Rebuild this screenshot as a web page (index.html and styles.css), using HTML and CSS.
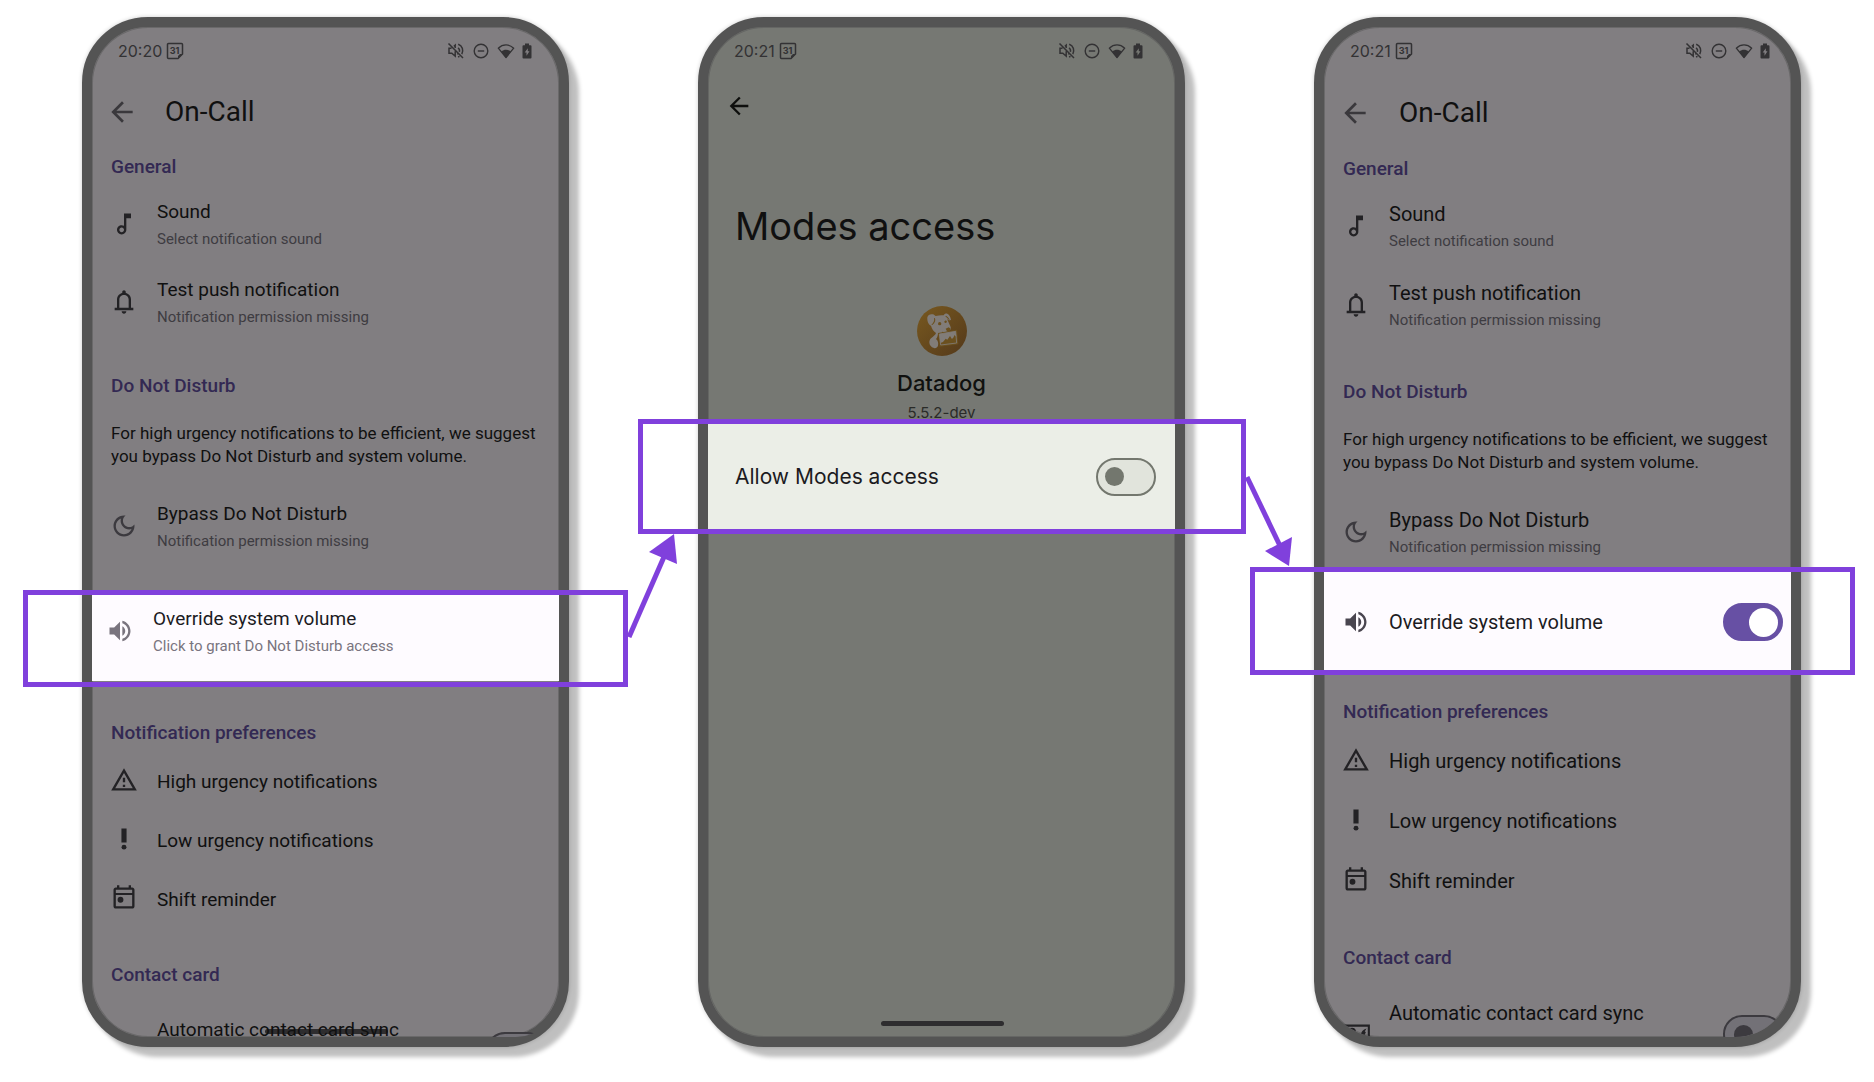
FILE: index.html
```html
<!DOCTYPE html>
<html lang="en">
<head>
<meta charset="utf-8">
<meta name="viewport" content="width=device-width, initial-scale=1">
<title>Override system volume on Android</title>
<link rel="stylesheet" href="styles.css">
</head>
<body>
<svg class="sprite" aria-hidden="true">
  <symbol id="i-back" viewBox="0 0 24 24"><path d="M20 11H7.83l5.59-5.59L12 4l-8 8 8 8 1.41-1.41L7.83 13H20v-2z"/></symbol>
  <symbol id="i-note" viewBox="0 0 24 24"><path d="M12 3l.01 10.55c-.59-.34-1.27-.55-2-.55C7.79 13 6 14.79 6 17s1.79 4 4.01 4S14 19.21 14 17V7h4V3h-6zm-1.99 16c-1.1 0-2-.9-2-2s.9-2 2-2 2 .9 2 2-.9 2-2 2z"/></symbol>
  <symbol id="i-bell" viewBox="0 0 24 24"><path d="M4 19v-2h2v-7c0-1.38.42-2.61 1.25-3.69C8.08 5.24 9.17 4.53 10.5 4.2v-.7c0-.83.67-1.5 1.5-1.5s1.5.67 1.5 1.5v.7c1.33.33 2.42 1.04 3.25 2.11C17.58 7.39 18 8.62 18 10v7h2v2H4zm8 3c-1.1 0-2-.9-2-2h4c0 1.1-.9 2-2 2zM8 17h8v-7c0-2.2-1.8-4-4-4s-4 1.8-4 4v7z"/></symbol>
  <symbol id="i-moon" viewBox="0 0 24 24"><path d="M9.37 5.51C9.19 6.15 9.1 6.82 9.1 7.5c0 4.08 3.32 7.4 7.4 7.4.68 0 1.35-.09 1.99-.27C17.45 17.19 14.93 19 12 19c-3.86 0-7-3.14-7-7 0-2.93 1.81-5.45 4.37-6.49zM12 3c-4.97 0-9 4.03-9 9s4.03 9 9 9 9-4.03 9-9c0-.46-.04-.92-.1-1.36-.98 1.37-2.58 2.26-4.4 2.26-2.98 0-5.4-2.42-5.4-5.4 0-1.81.89-3.42 2.26-4.4C12.92 3.04 12.46 3 12 3z"/></symbol>
  <symbol id="i-volume" viewBox="0 0 24 24"><path d="M3 9v6h4l5 5V4L7 9H3zm13.500 3c0-1.770-1.020-3.290-2.500-4.030v8.050c1.480-.73 2.500-2.250 2.500-4.020zM14 3.230v2.060c2.890.86 5 3.540 5 6.710s-2.110 5.850-5 6.710v2.060c4.010-.91 7-4.490 7-8.770s-2.990-7.860-7-8.770z"/></symbol>
  <symbol id="i-warning" viewBox="0 0 24 24"><path d="M12 5.990L19.530 19H4.470L12 5.990M12 2L1 21h22L12 2zm1 14h-2v2h2v-2zm0-6h-2v4h2v-4z"/></symbol>
  <symbol id="i-priority" viewBox="0 0 24 24"><path d="M9.800 3h4.400v12H9.800z"/><circle cx="12" cy="19" r="2.100"/></symbol>
  <symbol id="i-today" viewBox="0 0 24 24"><path d="M19 3h-1V1h-2v2H8V1H6v2H5c-1.110 0-1.990.9-1.990 2L3 19c0 1.100.89 2 2 2h14c1.100 0 2-.9 2-2V5c0-1.100-.9-2-2-2zm0 16H5V9.500h14V19zm0-11.200H5V5h14v2.800z"/><circle cx="9" cy="13.500" r="2.500"/></symbol>
  <symbol id="i-contact" viewBox="0 0 24 24"><path fill="none" stroke="currentColor" stroke-width="1.800" d="M1 4h22v16H1zM11 9a2.400 2.400 0 1 1-4.800 0 2.400 2.400 0 0 1 4.800 0M4 18c1-5 8-5 9 0"/><path d="M21 6.500c-4 1-6 5-4 9l2-1-.8-2h1l1.300-3-1-.6z"/></symbol>
  <symbol id="i-mute" viewBox="0 0 18 18"><g fill="none" stroke="currentColor" stroke-width="1.500"><path d="M1.500 1.500l14.500 14.500M4.500 6.200H2v5h2.800l3.400 3v-5M8.200 6V3.200L6.900 4.400M11 5.800c1.300.8 1.800 2.300 1.400 4M11.200 2.300c4.200 1.400 5.600 6 3.600 9.800M12.500 14.300l-1.400.7M10.700 11.500v1"/></g></symbol>
  <symbol id="i-dnd" viewBox="0 0 18 18"><circle cx="9" cy="9" r="6.800" fill="none" stroke="currentColor" stroke-width="1.400"/><path d="M5.800 8.300h6.400v1.400H5.800z"/></symbol>
  <symbol id="i-wifi" viewBox="0 0 18 18"><path fill="none" stroke="currentColor" stroke-width="1.300" stroke-linejoin="round" d="M9 15.500L1.300 6.200c4.600-4.400 10.800-4.400 15.400 0z"/><path d="M9 16L4.300 9.500c2.800-2.300 6.600-2.300 9.400 0z"/></symbol>
  <symbol id="i-battery" viewBox="0 0 10 18"><path fill-rule="evenodd" d="M3 1.500h4v1.700h1.500a1 1 0 0 1 1 1v11.300a1 1 0 0 1-1 1h-7a1 1 0 0 1-1-1V4.200a1 1 0 0 1 1-1H3zM5.800 6.200L2.700 10.600h1.800v3.200l3-4.500H5.800z"/></symbol>
</svg>

<main class="steps">
  <section class="phone" aria-label="On-Call settings before access">
    <header class="status">
      <span class="clock">20:20</span>
      <svg class="s-icon" viewBox="0 0 18 18"><path fill="none" stroke="currentColor" stroke-width="1.500" d="M2.500 1.500h13a1 1 0 0 1 1 1v9.500l-4.500 4.500H2.500a1 1 0 0 1-1-1v-13a1 1 0 0 1 1-1z"/><path d="M16.500 12l-4.500 4.500v-2.500l2-2z"/><text class="day" x="8.500" y="12" text-anchor="middle">31</text></svg>
      <span class="tray"><svg class="s-icon"><use href="#i-mute"/></svg><svg class="s-icon"><use href="#i-dnd"/></svg><svg class="s-icon"><use href="#i-wifi"/></svg><svg class="s-icon battery"><use href="#i-battery"/></svg></span>
    </header>
    <div class="appbar"><button class="back" aria-label="Back"><svg><use href="#i-back"/></svg></button><h1>On-Call</h1></div>
    <h2>General</h2>
    <ul>
      <li class="row"><svg class="icon"><use href="#i-note"/></svg><div class="text"><p>Sound</p><small>Select notification sound</small></div></li>
      <li class="row"><svg class="icon"><use href="#i-bell"/></svg><div class="text"><p>Test push notification</p><small>Notification permission missing</small></div></li>
    </ul>
    <h2 class="dnd">Do Not Disturb</h2>
    <p class="hint">For high urgency notifications to be efficient, we suggest<br>you bypass Do Not Disturb and system volume.</p>
    <ul>
      <li class="row muted"><svg class="icon"><use href="#i-moon"/></svg><div class="text"><p>Bypass Do Not Disturb</p><small>Notification permission missing</small></div></li>
      <li class="row highlight">
        <svg class="icon"><use href="#i-volume"/></svg><div class="text"><p>Override system volume</p><small>Click to grant Do Not Disturb access</small></div>
        <span class="callout"><svg class="arrow arrow-up" viewBox="0 0 56 108" aria-hidden="true"><path class="line" d="M2 103L40 16"/><path d="M47 0L22 18l28 12z"/></svg></span>
      </li>
    </ul>
    <h2 class="prefs">Notification preferences</h2>
    <ul>
      <li class="row single"><svg class="icon"><use href="#i-warning"/></svg><p>High urgency notifications</p></li>
      <li class="row single"><svg class="icon"><use href="#i-priority"/></svg><p>Low urgency notifications</p></li>
      <li class="row single"><svg class="icon"><use href="#i-today"/></svg><p>Shift reminder</p></li>
    </ul>
    <h2 class="contact">Contact card</h2>
    <div class="peek">
      <span class="icon"></span>
      <label class="text" for="sync-a">Automatic contact card sync</label>
      <input class="switch" type="checkbox" role="switch" id="sync-a">
    </div>
    <span class="home-bar"></span>
  </section>

  <section class="phone access" aria-label="Modes access">
    <header class="status">
      <span class="clock">20:21</span>
      <svg class="s-icon" viewBox="0 0 18 18"><path fill="none" stroke="currentColor" stroke-width="1.500" d="M2.500 1.500h13a1 1 0 0 1 1 1v9.500l-4.500 4.500H2.500a1 1 0 0 1-1-1v-13a1 1 0 0 1 1-1z"/><path d="M16.500 12l-4.500 4.500v-2.500l2-2z"/><text class="day" x="8.500" y="12" text-anchor="middle">31</text></svg>
      <span class="tray"><svg class="s-icon"><use href="#i-mute"/></svg><svg class="s-icon"><use href="#i-dnd"/></svg><svg class="s-icon"><use href="#i-wifi"/></svg><svg class="s-icon battery"><use href="#i-battery"/></svg></span>
    </header>
    <div class="appbar"><button class="back" aria-label="Back"><svg><use href="#i-back"/></svg></button></div>
    <h1>Modes access</h1>
    <div class="app">
      <svg class="logo" viewBox="15 15 150 150" role="img" aria-label="Datadog logo">
        <defs><linearGradient id="gold" x1="0" y1="0" x2="1" y2="1"><stop offset="0" stop-color="#785920"/><stop offset="1" stop-color="#54391a"/></linearGradient></defs>
        <circle cx="90" cy="90" r="75" fill="url(#gold)"/>
        <g fill="#817c78">
          <path d="M46 49c2-8 9-11 17-9 3 1 5 4 8 5 8-2 17-3 24-2 2-4 6-6 11-5 5 1 9 9 11 18-3 2-6 2-8 1l-4-3c3 6 6 12 8 17 3 5 4 10 3 14-2 5-7 7-12 7l-4 3-22 3c-1 7-2 11-6 16 6 5 8 12 6 20-2 5-7 9-12 7-9-2-14-9-14-17 0-6 3-12 7-14 5-4 11-8 13-14-8-6-12-12-15-22-8-2-12-14-11-25z"/>
        </g>
        <g fill="#6b501e">
          <path d="M68 51c4 6 2 14-7 21l-3-1c7-6 10-12 8-20zM102 44c4 2 8 6 11 12l-2 1c-4-4-7-8-11-11z"/>
          <circle cx="83" cy="68" r="5"/><path d="M97 61l5-3 3 4-3 4-4-1zM101 83l9-4 6 4-2 7-9 1zM91 92l18 5-2 2-17-3z"/>
          <path d="M78 96l57-10 4 44-56 7z"/>
        </g>
        <path d="M82 99l49-8 3 35-48 6z" fill="none" stroke="#817c78" stroke-width="2.500"/>
        <path d="M82 99l49-8 2 17-5-6-5 10-4 1-5-8-8 11-5-3-8 10-8 3z" fill="#817c78"/>
      </svg>
      <strong>Datadog</strong>
      <span>5.5.2-dev</span>
    </div>
    <div class="highlight">
      <label for="modes">Allow Modes access</label>
      <input class="switch" type="checkbox" role="switch" id="modes">
      <span class="callout"><svg class="arrow arrow-down" viewBox="0 0 56 96" aria-hidden="true"><path class="line" d="M2 3L37 76"/><path d="M44 92L20 77l27-14z"/></svg></span>
    </div>
    <span class="home-bar"></span>
  </section>

  <section class="phone granted" aria-label="On-Call settings after access">
    <header class="status">
      <span class="clock">20:21</span>
      <svg class="s-icon" viewBox="0 0 18 18"><path fill="none" stroke="currentColor" stroke-width="1.500" d="M2.500 1.500h13a1 1 0 0 1 1 1v9.500l-4.500 4.500H2.500a1 1 0 0 1-1-1v-13a1 1 0 0 1 1-1z"/><path d="M16.500 12l-4.500 4.500v-2.500l2-2z"/><text class="day" x="8.500" y="12" text-anchor="middle">31</text></svg>
      <span class="tray"><svg class="s-icon"><use href="#i-mute"/></svg><svg class="s-icon"><use href="#i-dnd"/></svg><svg class="s-icon"><use href="#i-wifi"/></svg><svg class="s-icon battery"><use href="#i-battery"/></svg></span>
    </header>
    <div class="appbar"><button class="back" aria-label="Back"><svg><use href="#i-back"/></svg></button><h1>On-Call</h1></div>
    <h2>General</h2>
    <ul>
      <li class="row"><svg class="icon"><use href="#i-note"/></svg><div class="text"><p>Sound</p><small>Select notification sound</small></div></li>
      <li class="row"><svg class="icon"><use href="#i-bell"/></svg><div class="text"><p>Test push notification</p><small>Notification permission missing</small></div></li>
    </ul>
    <h2 class="dnd">Do Not Disturb</h2>
    <p class="hint">For high urgency notifications to be efficient, we suggest<br>you bypass Do Not Disturb and system volume.</p>
    <ul>
      <li class="row muted"><svg class="icon"><use href="#i-moon"/></svg><div class="text"><p>Bypass Do Not Disturb</p><small>Notification permission missing</small></div></li>
      <li class="row highlight">
        <svg class="icon"><use href="#i-volume"/></svg>
        <label class="text" for="volume">Override system volume</label>
        <input class="switch" type="checkbox" role="switch" id="volume" checked>
        <span class="callout"></span>
      </li>
    </ul>
    <h2 class="prefs">Notification preferences</h2>
    <ul>
      <li class="row single"><svg class="icon"><use href="#i-warning"/></svg><p>High urgency notifications</p></li>
      <li class="row single"><svg class="icon"><use href="#i-priority"/></svg><p>Low urgency notifications</p></li>
      <li class="row single"><svg class="icon"><use href="#i-today"/></svg><p>Shift reminder</p></li>
    </ul>
    <h2 class="contact">Contact card</h2>
    <div class="peek">
      <svg class="icon"><use href="#i-contact"/></svg>
      <label class="text" for="sync-b">Automatic contact card sync</label>
      <input class="switch" type="checkbox" role="switch" id="sync-b">
    </div>
  </section>
</main>
</body>
</html>
```
FILE: styles.css
```css
* { box-sizing: border-box; }

body {
  margin: 0;
  background: #fff;
  font-family: Roboto, "Liberation Sans", sans-serif;
}

h1, h2, p, ul { margin: 0; padding: 0; font-weight: 400; }
ul { list-style: none; }
svg { fill: currentColor; display: block; flex: none; }
.sprite { position: absolute; width: 0; height: 0; }

.steps {
  display: grid;
  grid-template-columns: repeat(3, minmax(0, 1fr));
  gap: 129px;
  padding: 17px 73px 34px 82px;
}

/* Phone frame */
.phone {
  --row: 78px;
  --end: 13px;
  --title: 19px;
  --purple: #332953;
  position: relative;
  display: flex;
  flex-direction: column;
  border: 10px solid #545454;
  border-radius: 66px;
  background: #817e81;
  color: #101010;
  box-shadow: inset 0 0 0 1px #6a696a, 0 0 4px rgba(0, 0, 0, .2), 10px 10px 4px rgba(0, 0, 0, .25);
}

.status {
  display: flex;
  align-items: center;
  height: 48px;
  padding: 0 27px 0 26px;
  color: #333234;
}
.clock { margin-right: 4px; font: 400 16px/20px Inter, sans-serif; }
.s-icon { width: 18px; height: 18px; }
.day { font: 700 9px Inter, sans-serif; }
.battery { width: 10px; }
.tray { display: flex; gap: 7px; margin-left: auto; }

.appbar {
  display: flex;
  align-items: center;
  gap: 27px;
  height: 73px;
  padding-left: 14px;
}
.back { border: 0; padding: 0; background: none; color: #3a383c; }
.back svg { width: 32px; height: 32px; }
.appbar h1 { font-size: 28px; line-height: 36px; }

h2 {
  padding-left: 19px;
  font-size: 19px;
  font-weight: 500;
  line-height: 38px;
  color: var(--purple);
}
.dnd { margin-top: 25px; }
.prefs { margin-top: 33px; }
.contact { margin-top: 27px; }

.hint { padding: 17px 0 20px 19px; font-size: 17px; line-height: 23px; white-space: nowrap; }

/* Setting rows */
.row {
  display: flex;
  align-items: center;
  gap: 19px;
  height: var(--row);
  padding: 0 var(--end) 0 18px;
  font-size: var(--title);
  line-height: 28px;
}
.icon { width: 28px; height: 28px; color: #232225; }
.row .icon { margin-bottom: 3px; }
.muted .icon { color: #3c3a3f; }
.text { flex: 1; }
.row small { display: block; font-size: 15px; line-height: 27px; color: #3e3c41; }
.single { height: 59px; }

/* Highlighted row and its callout frame */
.highlight { position: relative; background: #fefbff; color: #1c1b1f; }
.row.highlight { height: 86px; margin-top: 29px; padding: 0 5px 11px 14px; }
.highlight .icon, .highlight small { color: #79747e; }
.callout {
  position: absolute;
  inset: -5px -69px -6px -69px;
  border: 5px solid #8040dc;
  pointer-events: none;
}
.arrow { position: absolute; left: 100%; width: 56px; margin-left: 4px; color: #8040dc; }
.arrow .line { fill: none; stroke: currentColor; stroke-width: 5; }
.arrow-up { bottom: 40px; height: 108px; }
.arrow-down { top: 50px; height: 96px; }

/* Switch */
.switch {
  appearance: none;
  flex: none;
  display: flex;
  align-items: center;
  width: 60px;
  height: 38px;
  margin: 0;
  padding: 0 9px;
  border: 2px solid #3c3a3f;
  border-radius: 19px;
  background: #737177;
}
.switch::before { content: ""; width: 19px; height: 19px; border-radius: 50%; background: #3c3a3f; }
.switch:checked { justify-content: flex-end; padding: 0 3px; border-color: #6750a4; background: #6750a4; }
.switch:checked::before { width: 29px; height: 29px; background: #fff; }

/* Last setting, cut off by the screen edge */
.peek {
  display: flex;
  gap: 19px;
  height: 43px;
  padding: 22px var(--end) 0 18px;
  overflow: hidden;
  border-radius: 0 0 56px 56px;
  font-size: var(--title);
  line-height: 28px;
}
.peek .text { position: relative; z-index: 1; }
.peek .switch { margin-top: 16px; }
.peek .icon { margin-top: 22px; }

.home-bar {
  position: absolute;
  left: 50%;
  bottom: 3px;
  width: 123px;
  height: 5px;
  margin-left: -61px;
  border-radius: 3px;
  background: #2e2d2f;
}

/* Modes access screen */
.access { background: #767873; box-shadow: inset 0 0 0 1px #656664, 0 0 4px rgba(0, 0, 0, .2), 10px 10px 4px rgba(0, 0, 0, .25); font-family: Inter, sans-serif; }
.access .status { padding-right: 32px; }
.access .appbar { height: 62px; padding-left: 17px; }
.access .back { color: #0e0f0d; }
.access .back svg { width: 28px; height: 28px; }
.access > h1 { margin-top: 65px; padding-left: 27px; font-size: 38px; line-height: 48px; }
.app { display: flex; flex-direction: column; align-items: center; margin-top: 56px; color: #10110f; }
.logo { width: 50px; height: 50px; margin-bottom: 13px; }
.app strong { font-size: 22px; font-weight: 500; line-height: 28px; }
.app span { margin-top: 5px; font-size: 15px; line-height: 22px; color: #2a2b28; }
.access .highlight {
  display: flex;
  align-items: center;
  justify-content: space-between;
  height: 105px;
  padding: 0 19px 0 27px;
  background: #ebeee7;
  font-size: 21px;
}
.access .callout { inset: -5px -71px -5px -70px; }
.access .switch { border-color: #73776e; background: #e1e4dc; padding: 0 7px; }
.access .switch::before { background: #73776e; }
.access .home-bar { bottom: 11px; }

/* Screen after access was granted */
.granted { --row: 79px; --end: 8px; --title: 20px; }
.granted .status { padding-right: 21px; }
.granted .appbar { height: 75px; padding-left: 15px; gap: 28px; }
.granted .dnd { margin-top: 27px; }
.granted .row.highlight { height: 98px; margin-top: -1px; padding: 2px 8px 0 18px; }
.granted .highlight .icon { margin-bottom: 0; color: #49454f; }
.granted .callout { inset: -5px -64px -5px -74px; }
.granted .prefs { margin-top: 23px; }
.granted .single { height: 60px; }
.granted .contact { margin-top: 28px; }
.granted .peek { height: 60px; }
```
